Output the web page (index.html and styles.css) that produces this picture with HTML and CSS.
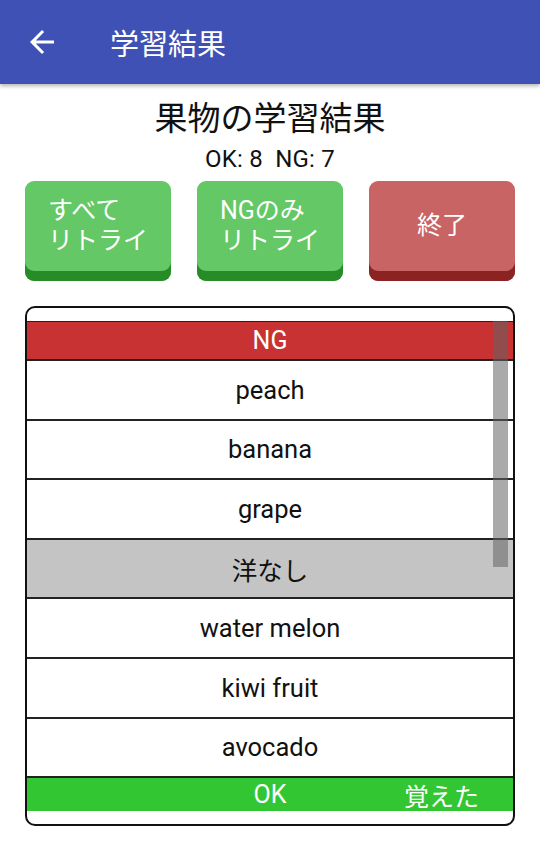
FILE: index.html
```html
<!DOCTYPE html>
<html lang="ja">
<head>
<meta charset="utf-8">
<link rel="stylesheet" href="styles.css">
</head>
<body>
<header class="appbar">
  <svg class="back" width="36" height="36" viewBox="0 0 24 24"><path d="M20 11H7.83l5.59-5.59L12 4l-8 8 8 8 1.41-1.41L7.83 13H20v-2z" fill="#fff"/></svg>
  <span class="appbar-title">学習結果</span>
</header>
<main class="content">
  <h1 class="title">果物の学習結果</h1>
  <div class="score">OK: 8&nbsp;&nbsp;NG: 7</div>
  <div class="buttons">
    <button class="btn green"><span class="label">すべて<br>リトライ</span></button>
    <button class="btn green"><span class="label">NGのみ<br>リトライ</span></button>
    <button class="btn red"><span class="label">終了</span></button>
  </div>
  <div class="listbox">
    <div class="list">
      <div class="row head ng">NG</div>
      <div class="row">peach</div>
      <div class="row">banana</div>
      <div class="row">grape</div>
      <div class="row sel">洋なし</div>
      <div class="row">water melon</div>
      <div class="row">kiwi fruit</div>
      <div class="row">avocado</div>
      <div class="row head ok"><span>OK</span><span class="ok-right">覚えた</span></div>
    </div>
    <div class="scrollbar"></div>
  </div>
</main>
</body>
</html>
```
FILE: styles.css
```css
* { box-sizing: border-box; }
html, body { margin: 0; padding: 0; background: #fff; }
body {
  width: 540px;
  height: 850px;
  font-family: Roboto, "Noto Sans CJK JP", sans-serif;
  color: #111;
  overflow: hidden;
}
.appbar {
  height: 84px;
  background: #3F51B5;
  display: flex;
  align-items: center;
  padding-left: 24px;
  box-shadow: 0 2px 4px rgba(0,0,0,0.3);
  position: relative;
  z-index: 1;
}
.back { width: 36px; height: 36px; flex: none; }
.appbar-title {
  color: #fff;
  font-size: 29px;
  margin-left: 50px;
  font-family: Roboto, "Noto Sans CJK JP", sans-serif;
}
.content { padding: 0 25px; }
.title {
  margin: 0;
  padding-top: 12px;
  text-align: center;
  font-weight: normal;
  font-size: 33px;
  line-height: 46px;
}
.score {
  text-align: center;
  font-size: 24px;
  line-height: 25px;
  padding-top: 5px;
  letter-spacing: 0.2px;
}
.buttons {
  display: grid;
  grid-template-columns: repeat(3, 1fr);
  column-gap: 26px;
  margin-top: 9px;
}
.btn {
  height: 100px;
  border: none;
  border-radius: 9px;
  color: #fff;
  font-family: Roboto, "Noto Sans CJK JP", sans-serif;
  font-size: 25px;
  line-height: 30px;
  padding: 0 0 10px 0;
  display: flex;
  align-items: center;
  justify-content: center;
}
.label { text-align: left; }
.green { background: #64C866; box-shadow: inset 0 -10px 0 #278B27; }
.red { background: #C86464; box-shadow: inset 0 -10px 0 #8B2323; }
.listbox {
  margin-top: 25px;
  height: 520px;
  border: 2px solid #111;
  border-radius: 10px;
  padding-top: 13px;
  position: relative;
  overflow: hidden;
}
.list { display: flex; flex-direction: column; }
.row {
  height: 59.6px;
  border-bottom: 2px solid #222;
  display: flex;
  align-items: center;
  justify-content: center;
  font-size: 25.5px;
}
.row.head {
  color: #fff;
  font-size: 25px;
}
.ng {
  height: 40px;
  background: #C83232;
  border-top: 1.5px solid #222;
}
.sel { background: #C4C4C4; }
.ok {
  height: 33px;
  background: #33C633;
  border-bottom: none;
  position: relative;
}
.ok-right {
  position: absolute;
  right: 34px;
  top: 50%;
  transform: translateY(-50%);
  font-size: 25px;
}
.scrollbar {
  position: absolute;
  top: 13px;
  right: 5px;
  width: 15px;
  height: 246px;
  background: rgba(100,100,100,0.55);
}
```
